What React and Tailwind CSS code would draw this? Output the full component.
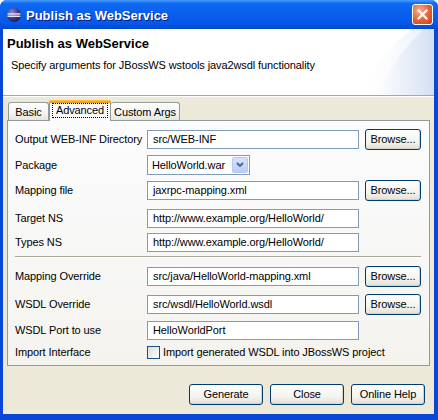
import React from 'react';

const sans = "font-['Liberation_Sans',Arial,sans-serif]";

function TextBox({ value }) {
  return (
    <div className="w-[212px] h-[19px] border border-[#7f9db9] bg-white pl-[5px] flex items-center text-[11px] tracking-[-0.1px] text-black whitespace-nowrap overflow-hidden">
      {value}
    </div>
  );
}

function XPButton({ children, w = 'w-[56px]' }) {
  return (
    <button
      className={`${w} h-[21px] rounded-[3px] border border-[#003c74] bg-[linear-gradient(to_bottom,#ffffff,#f4f3ee_60%,#e3e0d6)] shadow-[inset_-1px_-1px_0_#d6d0c5] text-[11px] tracking-[-0.1px] text-black flex items-center justify-center`}
    >
      {children}
    </button>
  );
}

function Row({ label, mt, h = 'h-[20px]', children }) {
  return (
    <div className={`flex items-center ${h} ${mt}`}>
      <div className="w-[132px] text-[11px] tracking-[-0.1px] text-black whitespace-nowrap">{label}</div>
      <div className="flex items-center gap-[6px]">{children}</div>
    </div>
  );
}

function EclipseIcon() {
  return (
    <svg width="16" height="16" viewBox="0 0 16 16">
      <defs>
        <radialGradient id="eg" cx="0.35" cy="0.3" r="0.8">
          <stop offset="0" stopColor="#8c86c8" />
          <stop offset="0.6" stopColor="#3b3382" />
          <stop offset="1" stopColor="#1b154d" />
        </radialGradient>
      </defs>
      <circle cx="8" cy="8" r="7" fill="url(#eg)" />
      <rect x="1.5" y="6.3" width="13" height="1.3" fill="#f2f2ff" />
      <rect x="1.5" y="8.6" width="13" height="1.3" fill="#f2f2ff" />
    </svg>
  );
}

export default function App() {
  return (
    <div className={`w-[438px] h-[420px] bg-white ${sans}`}>
      <div className="w-full h-full flex flex-col rounded-t-[7px] overflow-hidden bg-[#0b47d6]">
        {/* Title bar */}
        <div className="h-[29px] shrink-0 flex items-center bg-[linear-gradient(to_bottom,#4a9cff,#0f6af2_12%,#0a5fee_45%,#0558e8_80%,#0048d2)]">
          <div className="ml-[6px] mt-[1px]">
            <EclipseIcon />
          </div>
          <div className="ml-[4px] mt-[2px] text-[13px] font-bold text-white [text-shadow:1px_1px_0_#0a1a80]">
            Publish as WebService
          </div>
          <div className="ml-auto mr-[5px] w-[21px] h-[21px] rounded-[3px] border border-white bg-[radial-gradient(circle_at_35%_30%,#f7b095,#e45f36_55%,#c9401e)] flex items-center justify-center">
            <svg width="11" height="11" viewBox="0 0 11 11">
              <path d="M1.5 1.5 L9.5 9.5 M9.5 1.5 L1.5 9.5" stroke="#ffffff" strokeWidth="2.2" strokeLinecap="square" />
            </svg>
          </div>
        </div>

        {/* Client area */}
        <div className="flex-1 flex flex-col ml-[3px] mr-[4px] mb-[6px] bg-[#ece9d8]">
          {/* Header */}
          <div className="relative h-[66px] shrink-0 bg-white overflow-hidden">
            <svg className="absolute right-0 top-0" width="80" height="66" viewBox="0 0 80 66">
              <defs>
                <linearGradient id="hg" x1="0" y1="0" x2="1" y2="0">
                  <stop offset="0" stopColor="#ffffff" />
                  <stop offset="1" stopColor="#d3e0f4" />
                </linearGradient>
                <linearGradient id="hg2" x1="0" y1="0" x2="1" y2="0">
                  <stop offset="0" stopColor="#ffffff" stopOpacity="0" />
                  <stop offset="1" stopColor="#e4ecf8" />
                </linearGradient>
              </defs>
              <path d="M2 66 C 18 40, 36 16, 58 0 L 80 0 L 80 66 Z" fill="url(#hg2)" />
              <path d="M22 66 C 34 42, 50 18, 70 0 L 80 0 L 80 66 Z" fill="url(#hg)" />
            </svg>
            <div className="relative pl-[4px] pt-[7px] text-[13px] font-bold text-black leading-[15px]">
              Publish as WebService
            </div>
            <div className="relative pl-[8px] pt-[7px] text-[11px] tracking-[-0.1px] text-black leading-[14px]">
              Specify arguments for JBossWS wstools java2wsdl functionality
            </div>
          </div>
          <div className="h-px bg-[#aca899]" />
          <div className="h-px bg-white" />

          {/* Body */}
          <div className="flex-1 flex flex-col pt-[3px]">
            <div className="ml-[4px] mr-[4px]">
              {/* Tabs */}
              <div className="flex items-end h-[20px] pl-[1px] text-[11px] tracking-[-0.1px] text-black">
                <div className="w-[41px] h-[18px] border border-b-0 border-[#919b9c] rounded-t-[3px] bg-[linear-gradient(to_bottom,#ffffff,#f3f3ef_60%,#e6e5de)] flex items-center justify-center pt-[1px]">
                  Basic
                </div>
                <div className="relative z-10 -mb-px w-[62px] h-[21px] border-x border-[#919b9c] rounded-t-[3px] bg-[#fcfcfe] flex flex-col">
                  <div className="h-[3px] rounded-t-[3px] bg-[linear-gradient(to_bottom,#ffc73c,#f5a623_60%,#e68b2c)] -mx-px" />
                  <div className="mx-[2px] mt-0 h-[15px] border border-dotted border-black flex items-center justify-center leading-none">
                    Advanced
                  </div>
                </div>
                <div className="w-[69px] h-[18px] border border-b-0 border-l-0 border-[#919b9c] rounded-t-[3px] bg-[linear-gradient(to_bottom,#ffffff,#f3f3ef_60%,#e6e5de)] flex items-center justify-center pt-[1px]">
                  Custom Args
                </div>
              </div>

              {/* Panel */}
              <div className="border border-[#919b9c] bg-[linear-gradient(to_bottom,#fcfcfe,#f4f3ee)] pl-[7px] pr-[7px] pt-[7px] pb-[3px]">
                <Row label="Output WEB-INF Directory" h="h-[22px]" mt="mt-0">
                  <TextBox value="src/WEB-INF" />
                  <XPButton>Browse...</XPButton>
                </Row>
                <Row label="Package" mt="mt-[5px]">
                  <div className="w-[103px] h-[20px] border border-[#7f9db9] bg-white flex items-center">
                    <div className="flex-1 pl-[4px] text-[11px] tracking-[-0.1px] text-black">HelloWorld.war</div>
                    <div className="w-[16px] h-[16px] mr-px rounded-[2px] border border-[#b5c8f1] bg-[linear-gradient(to_bottom,#d6e2fd,#b9cdfb)] flex items-center justify-center">
                      <svg width="8" height="6" viewBox="0 0 8 6">
                        <path d="M1 1 L4 4 L7 1" fill="none" stroke="#4d6185" strokeWidth="1.8" />
                      </svg>
                    </div>
                  </div>
                </Row>
                <Row label="Mapping file" h="h-[22px]" mt="mt-[4px]">
                  <TextBox value="jaxrpc-mapping.xml" />
                  <XPButton>Browse...</XPButton>
                </Row>
                <Row label="Target NS" mt="mt-[7px]">
                  <TextBox value="http://www.example.org/HelloWorld/" />
                </Row>
                <Row label="Types NS" mt="mt-[4px]">
                  <TextBox value="http://www.example.org/HelloWorld/" />
                </Row>
                <div className="mt-[4px] mr-[1px]">
                  <div className="h-px bg-[#aca899]" />
                  <div className="h-px bg-white" />
                </div>
                <Row label="Mapping Override" h="h-[22px]" mt="mt-[7px]">
                  <TextBox value="src/java/HelloWorld-mapping.xml" />
                  <XPButton>Browse...</XPButton>
                </Row>
                <Row label="WSDL Override" h="h-[22px]" mt="mt-[6px]">
                  <TextBox value="src/wsdl/HelloWorld.wsdl" />
                  <XPButton>Browse...</XPButton>
                </Row>
                <Row label="WSDL Port to use" mt="mt-[5px]">
                  <TextBox value="HelloWorldPort" />
                </Row>
                <Row label="Import Interface" mt="mt-[2px]">
                  <div className="flex items-center gap-[3px]">
                    <div className="w-[13px] h-[13px] border border-[#1c5180] bg-[linear-gradient(135deg,#dcdcd7,#ffffff)]" />
                    <span className="text-[11px] tracking-[-0.1px] text-black whitespace-nowrap">
                      Import generated WSDL into JBossWS project
                    </span>
                  </div>
                </Row>
              </div>
            </div>

            {/* Dialog buttons */}
            <div className="mt-[18px] flex justify-end gap-[7px] pr-[9px]">
              <XPButton w="w-[74px]">Generate</XPButton>
              <XPButton w="w-[74px]">Close</XPButton>
              <XPButton w="w-[74px]">Online Help</XPButton>
            </div>
          </div>
        </div>
      </div>
    </div>
  );
}
